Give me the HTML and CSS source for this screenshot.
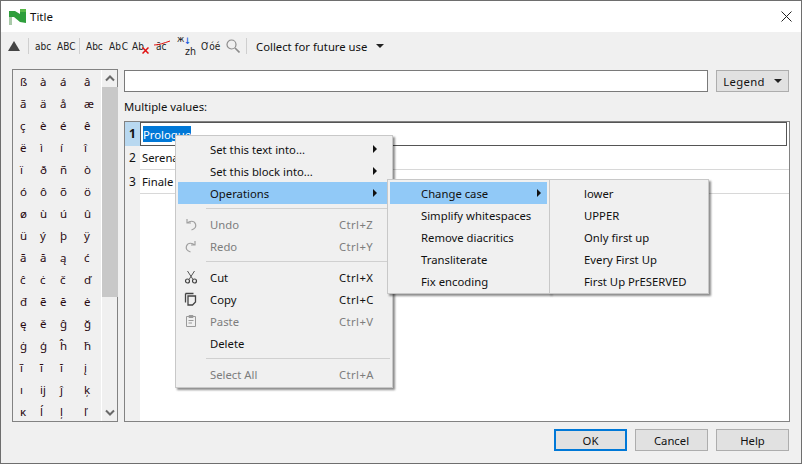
FILE: index.html
```html
<!DOCTYPE html>
<html lang="en">
<head>
    <meta charset="UTF-8">
    <title>Title</title>
    <link rel="stylesheet" href="styles.css">
</head>
<body>
    <div class="window">
        <div class="titlebar">
            <svg class="logo" width="17" height="16" viewBox="0 0 17 16">
                <path d="M0 8h3v8h-3z" fill="#a9c9a9"/>
                <path d="M0 2h6l5 3v-5h6v14l-6 -1 -6 -5h-5z" fill="#2f9e3c"/>
                <path d="M11 0h6v3h-6z" fill="#57b848"/>
            </svg>
            <span class="title-text">Title</span>
            <svg class="close" width="11" height="11" viewBox="0 0 11 11">
                <path d="M.5 .5l10 10M10.500 .5l-10 10" stroke="#222" stroke-width="1" fill="none"/>
            </svg>
        </div>

        <div class="toolbar">
            <span class="up-triangle"></span>
            <span class="tb-sep sep-a"></span>
            <span class="tb-icon w-22">abc</span>
            <span class="tb-icon w-22">ABC</span>
            <span class="tb-sep sep-b"></span>
            <span class="tb-icon w-23">Abc</span>
            <span class="tb-icon w-23 tight">Ab C</span>
            <span class="tb-icon w-24 has-mark">Ab<svg class="mark" width="7" height="7" viewBox="0 0 7 7"><path d="M.5 .5l6 6M6.500 .5l-6 6" stroke="#e01010" stroke-width="1.500"/></svg></span>
            <span class="tb-icon w-21 has-mark">āc<svg class="strike" width="16" height="6" viewBox="0 0 16 6"><path d="M0 5c5 0 10 -2 16 -4" stroke="#e01010" stroke-width="1" fill="none"/></svg></span>
            <span class="tb-icon w-24 small-stack"><span class="top">ж</span><span class="blue">↓</span><span class="bottom">zh</span></span>
            <span class="tb-icon w-25">Ơóé</span>
            <svg class="search" width="14" height="14" viewBox="0 0 14 14">
                <circle cx="5.500" cy="5.500" r="4.500" fill="none" stroke="#8c8c8c" stroke-width="1.200"/>
                <path d="M9 9l4.500 4.500" stroke="#8c8c8c" stroke-width="1.600"/>
            </svg>
            <span class="tb-sep sep-c"></span>
            <span class="collect">Collect for future use</span>
            <span class="arrow-down"></span>
        </div>

        <div class="main">
            <div class="char-panel">
                <div class="char-grid">
                    <span>ß</span><span>à</span><span>á</span><span>â</span>
                    <span>ã</span><span>ä</span><span>å</span><span>æ</span>
                    <span>ç</span><span>è</span><span>é</span><span>ê</span>
                    <span>ë</span><span>ì</span><span>í</span><span>î</span>
                    <span>ï</span><span>ð</span><span>ñ</span><span>ò</span>
                    <span>ó</span><span>ô</span><span>õ</span><span>ö</span>
                    <span>ø</span><span>ù</span><span>ú</span><span>û</span>
                    <span>ü</span><span>ý</span><span>þ</span><span>ÿ</span>
                    <span>ā</span><span>ă</span><span>ą</span><span>ć</span>
                    <span>ĉ</span><span>ċ</span><span>č</span><span>ď</span>
                    <span>đ</span><span>ē</span><span>ĕ</span><span>ė</span>
                    <span>ę</span><span>ě</span><span>ĝ</span><span>ğ</span>
                    <span>ġ</span><span>ģ</span><span>ĥ</span><span>ħ</span>
                    <span>ĩ</span><span>ī</span><span>ĭ</span><span>į</span>
                    <span>ı</span><span>ĳ</span><span>ĵ</span><span>ķ</span>
                    <span>ĸ</span><span>ĺ</span><span>ļ</span><span>ľ</span>
                </div>
                <div class="scrollbar">
                    <svg class="chevron" width="16" height="17" viewBox="0 0 16 17"><path d="M4 10.500l4 -4 4 4" stroke="#6a6a6a" stroke-width="2" fill="none"/></svg>
                    <div class="thumb"></div>
                    <svg class="chevron chevron-down" width="16" height="17" viewBox="0 0 16 17"><path d="M4 6.500l4 4 4 -4" stroke="#6a6a6a" stroke-width="2" fill="none"/></svg>
                </div>
            </div>

            <div class="right-panel">
                <div class="top-row">
                    <div class="line-edit"></div>
                    <div class="button legend">Legend <span class="arrow-down small"></span></div>
                </div>
                <div class="label">Multiple values:</div>
                <div class="table">
                    <div class="row row-current">
                        <div class="row-head">1</div>
                        <div class="cell-editor"><span class="selected">Prologue</span></div>
                    </div>
                    <div class="row">
                        <div class="row-head">2</div>
                        <div class="cell">Serenade</div>
                    </div>
                    <div class="row">
                        <div class="row-head">3</div>
                        <div class="cell">Finale</div>
                    </div>
                    <div class="table-rest"><div class="head-rest"></div></div>
                </div>
            </div>
        </div>

        <div class="footer">
            <div class="button default">OK</div>
            <div class="button">Cancel</div>
            <div class="button">Help</div>
        </div>
    </div>

    <div class="menu menu-main">
        <div class="item"><span class="name">Set this text into...</span><span class="sub"></span></div>
        <div class="item"><span class="name">Set this block into...</span><span class="sub"></span></div>
        <div class="item active"><span class="name">Operations</span><span class="sub"></span></div>
        <div class="menu-sep"></div>
        <div class="item off">
            <svg class="item-icon" width="14" height="14" viewBox="0 0 14 14"><path d="M3 2v4h4M3.500 6c1.500 -2 6.500 -3 8 1 1 3 -1 5 -4 6" fill="none" stroke="#a0a0a0" stroke-width="1.200"/></svg>
            <span class="name">Undo</span><span class="key">Ctrl+Z</span>
        </div>
        <div class="item off">
            <svg class="item-icon" width="14" height="14" viewBox="0 0 14 14"><path d="M11 2v4h-4M10.500 6c-1.500 -2 -6.500 -3 -8 1 -1 3 1 5 4 6" fill="none" stroke="#a0a0a0" stroke-width="1.200"/></svg>
            <span class="name">Redo</span><span class="key">Ctrl+Y</span>
        </div>
        <div class="menu-sep"></div>
        <div class="item">
            <svg class="item-icon" width="14" height="14" viewBox="0 0 14 14"><path d="M3.500 1l5.500 8.500M10.500 1l-5.500 8.500" fill="none" stroke="#555" stroke-width="1"/><circle cx="3.500" cy="11" r="2" fill="none" stroke="#444" stroke-width="1.200"/><circle cx="10.500" cy="11" r="2" fill="none" stroke="#444" stroke-width="1.200"/></svg>
            <span class="name">Cut</span><span class="key">Ctrl+X</span>
        </div>
        <div class="item">
            <svg class="item-icon" width="14" height="14" viewBox="0 0 14 14"><path d="M1.500 1.500h8M1.500 1.500v9M4 4h7.500v6l-3 3h-4.500z" fill="none" stroke="#444" stroke-width="1.300"/></svg>
            <span class="name">Copy</span><span class="key">Ctrl+C</span>
        </div>
        <div class="item off">
            <svg class="item-icon" width="14" height="14" viewBox="0 0 14 14"><path d="M2.500 2.500h9v10h-9zM5 1.500h4v2h-4zM4.500 6.500h5M4.500 9h3.500" fill="none" stroke="#9a9a9a" stroke-width="1"/></svg>
            <span class="name">Paste</span><span class="key">Ctrl+V</span>
        </div>
        <div class="item"><span class="name">Delete</span></div>
        <div class="menu-sep"></div>
        <div class="item off"><span class="name">Select All</span><span class="key">Ctrl+A</span></div>
    </div>

    <div class="menu menu-ops">
        <div class="item active"><span class="name">Change case</span><span class="sub"></span></div>
        <div class="item"><span class="name">Simplify whitespaces</span></div>
        <div class="item"><span class="name">Remove diacritics</span></div>
        <div class="item"><span class="name">Transliterate</span></div>
        <div class="item"><span class="name">Fix encoding</span></div>
    </div>

    <div class="menu menu-case">
        <div class="item"><span class="name">lower</span></div>
        <div class="item"><span class="name">UPPER</span></div>
        <div class="item"><span class="name">Only first up</span></div>
        <div class="item"><span class="name">Every First Up</span></div>
        <div class="item"><span class="name">First Up PrESERVED</span></div>
    </div>
</body>
</html>
```

FILE: styles.css
```css
html, body {
    margin: 0;
    padding: 0;
}
body {
    width: 802px;
    height: 464px;
    overflow: hidden;
    position: relative;
    font-family: "Noto Sans", "Open Sans", sans-serif;
    font-size: 11.3px;
    color: #111;
    background-color: #f0f0f0;
}
.window {
    width: 802px;
    height: 464px;
    box-sizing: border-box;
    border: 1px solid #6e6e6e;
    display: flex;
    flex-direction: column;
}

/* title bar */
.titlebar {
    height: 31px;
    flex: none;
    background-color: white;
    display: flex;
    align-items: center;
    padding-left: 8px;
    padding-right: 9px;
}
.logo {
    margin-right: 4px;
}
.title-text {
    flex: 1;
    font-size: 11.5px;
}

/* toolbar */
.toolbar {
    height: 28px;
    flex: none;
    display: flex;
    align-items: center;
    padding-left: 7px;
    box-sizing: border-box;
}
.up-triangle {
    width: 0;
    height: 0;
    border-left: 6.5px solid transparent;
    border-right: 6.5px solid transparent;
    border-bottom: 10px solid #444;
}
.tb-sep {
    width: 1px;
    height: 16px;
    background-color: #cfcfcf;
}
.sep-a {
    margin: 0 6px 0 8px;
}
.sep-b {
    margin: 0 6px 0 0;
}
.sep-c {
    margin: 0 9px 0 6px;
}
.tb-icon {
    position: relative;
    font-family: "DejaVu Sans Condensed", "DejaVu Sans", sans-serif;
    font-size: 10px;
    color: #222;
    white-space: nowrap;
}
.w-21 {
    width: 21px;
}
.w-22 {
    width: 22px;
}
.w-23 {
    width: 23px;
}
.w-24 {
    width: 24px;
}
.w-25 {
    width: 25px;
}
.tight {
    word-spacing: -2px;
}
.mark {
    position: absolute;
    left: 10px;
    top: 6px;
}
.strike {
    position: absolute;
    left: -2px;
    top: -1px;
}
.small-stack {
    height: 20px;
    font-size: 9px;
}
.small-stack .top {
    position: absolute;
    left: 0;
    top: -2px;
}
.small-stack .blue {
    position: absolute;
    left: 7px;
    top: 0;
    color: #2060e0;
    font-weight: bold;
}
.small-stack .bottom {
    position: absolute;
    left: 8px;
    top: 9px;
    font-size: 10.5px;
}
.collect {
    font-size: 11.3px;
}
.arrow-down {
    display: inline-block;
    width: 0;
    height: 0;
    margin-left: 9px;
    border-left: 4px solid transparent;
    border-right: 4px solid transparent;
    border-top: 4px solid #222;
}
.arrow-down.small {
    vertical-align: 2px;
}

/* main area */
.main {
    flex: 1;
    min-height: 0;
    display: flex;
    gap: 6px;
    padding: 9px 11px 0 11px;
}
.char-panel {
    width: 106px;
    height: 353px;
    flex: none;
    box-sizing: border-box;
    border: 1px solid #828282;
    display: flex;
}
.char-grid {
    width: 87px;
    height: 351px;
    flex: none;
    box-sizing: border-box;
    overflow: hidden;
    display: grid;
    grid-template-columns: 20px 20px 24px 23px;
    grid-auto-rows: 22px;
    padding-top: 1px;
}
.char-grid span {
    padding-left: 7px;
    line-height: 22px;
    font-size: 11.5px;
    color: #2a0a10;
}
.scrollbar {
    width: 16px;
    margin-left: 1px;
    border-left: 1px solid white;
    display: flex;
    flex-direction: column;
}
.chevron {
    flex: none;
}
.thumb {
    height: 210px;
    background-color: #c8c8c8;
}
.chevron-down {
    margin-top: auto;
}
.right-panel {
    flex: 1;
    min-width: 0;
    display: flex;
    flex-direction: column;
}
.top-row {
    display: flex;
    gap: 8px;
    height: 22px;
    margin-top: 1px;
    margin-right: 1px;
}
.line-edit {
    flex: 1;
    box-sizing: border-box;
    border: 1px solid #7a7a7a;
    background-color: white;
}
.button {
    width: 73px;
    height: 22px;
    box-sizing: border-box;
    border: 1px solid #adadad;
    background-color: #e1e1e1;
    display: flex;
    align-items: center;
    justify-content: center;
}
.legend {
    letter-spacing: 0.3px;
}
.legend .arrow-down {
    margin-left: 9px;
}
.label {
    height: 29px;
    line-height: 30px;
}
.table {
    width: 666px;
    height: 301px;
    box-sizing: border-box;
    border: 1px solid #828282;
    background-color: white;
    display: flex;
    flex-direction: column;
}
.row {
    height: 24px;
    flex: none;
    display: flex;
}
.row-head {
    width: 15px;
    flex: none;
    background-color: #f0f0f0;
    text-align: center;
    line-height: 24px;
    font-size: 12px;
}
.row-current .row-head {
    background-color: #b8d8f0;
    font-weight: bold;
}
.cell-editor {
    flex: 1;
    box-sizing: border-box;
    border: 1px solid #555;
    margin-right: 2px;
    padding: 3px 2px;
    line-height: 17px;
    background-color: white;
}
.selected {
    display: inline-block;
    height: 16px;
    background-color: #0078d7;
    color: white;
}
.cell {
    flex: 1;
    box-sizing: border-box;
    border-bottom: 1px solid #d8d8d8;
    padding-left: 2px;
    line-height: 23px;
}
.table-rest {
    flex: 1;
}
.head-rest {
    width: 15px;
    height: 100%;
    background-color: #f0f0f0;
}

/* footer buttons */
.footer {
    height: 41px;
    flex: none;
    box-sizing: border-box;
    display: flex;
    justify-content: flex-end;
    gap: 8px;
    padding: 7px 12px 0 0;
}
.button.default {
    border: 2px solid #0078d7;
}

/* popup menus */
.menu {
    position: absolute;
    box-sizing: border-box;
    background-color: #f0f0f0;
    border: 1px solid #c8c8c8;
    padding: 2px;
    box-shadow: 2px 2px 2px rgba(0, 0, 0, 0.45);
}
.menu-main {
    left: 175px;
    top: 135px;
    width: 218px;
    height: 253px;
}
.menu-ops {
    left: 387px;
    top: 179px;
    width: 163px;
    height: 115px;
    z-index: 1;
}
.menu-case {
    left: 549px;
    top: 179px;
    width: 160px;
    height: 115px;
    z-index: 2;
}
.item {
    height: 22px;
    position: relative;
    line-height: 23px;
    white-space: nowrap;
}
.item.active {
    background-color: #91c9f7;
}
.item.off {
    color: #7d7d7d;
}
.name {
    position: absolute;
    left: 32px;
}
.menu-ops .name {
    left: 31px;
}
.key {
    position: absolute;
    left: 161px;
    letter-spacing: 0.4px;
}
.sub {
    position: absolute;
    left: 195px;
    top: 7px;
    width: 0;
    height: 0;
    border-top: 4px solid transparent;
    border-bottom: 4px solid transparent;
    border-left: 4px solid #111;
}
.menu-ops .sub {
    left: 147px;
}
.item-icon {
    position: absolute;
    left: 6px;
    top: 4px;
}
.menu-sep {
    height: 1px;
    margin: 4px 0 4px 28px;
    background-color: #d0d0d0;
}
```
